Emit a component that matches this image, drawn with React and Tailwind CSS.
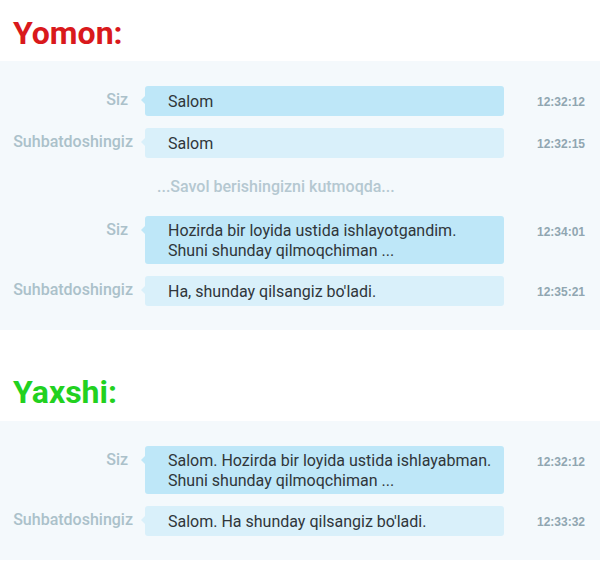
const bad = [
  { who: 'Siz', me: true, lines: ['Salom'], time: '12:32:12' },
  { who: 'Suhbatdoshingiz', lines: ['Salom'], time: '12:32:15' },
  { system: '...Savol berishingizni kutmoqda...' },
  { who: 'Siz', me: true, lines: ['Hozirda bir loyida ustida ishlayotgandim.', 'Shuni shunday qilmoqchiman ...'], time: '12:34:01' },
  { who: 'Suhbatdoshingiz', lines: ["Ha, shunday qilsangiz bo'ladi."], time: '12:35:21' },
];

const good = [
  { who: 'Siz', me: true, lines: ['Salom. Hozirda bir loyida ustida ishlayabman.', 'Shuni shunday qilmoqchiman ...'], time: '12:32:12' },
  { who: 'Suhbatdoshingiz', lines: ["Salom. Ha shunday qilsangiz bo'ladi."], time: '12:33:32' },
];

function Message({ msg }) {
  if (msg.system) {
    return (
      <div className="h-[34px] flex items-center pl-[157px] text-[16px] font-medium text-[#b5c8d1]">
        {msg.system}
      </div>
    );
  }
  const bg = msg.me ? 'bg-[#bee7f8]' : 'bg-[#d9f0fa]';
  const tail = msg.me ? 'border-r-[#bee7f8]' : 'border-r-[#d9f0fa]';
  return (
    <div className="flex items-start">
      <div className={`w-[133px] shrink-0 pt-[4px] text-right text-[16px] leading-5 font-medium text-[#abc1ca] ${msg.me ? 'pr-[5px]' : ''}`}>
        {msg.who}
      </div>
      <div className="relative ml-[12px]">
        <span className={`absolute left-[-4px] top-[10px] h-0 w-0 border-y-[4px] border-y-transparent border-r-[4px] ${tail}`} />
        <div className={`w-[359px] min-h-[30px] flex flex-col justify-center rounded-[3px] pl-[23px] pr-3 pt-[5px] pb-[3px] text-[16px] leading-5 text-[#30363a] ${bg}`}>
          {msg.lines.map((l) => (
            <div key={l}>{l}</div>
          ))}
        </div>
      </div>
      <div className="ml-[33px] pt-[8px] text-[12px] leading-4 font-bold text-[#90a6b1]" style={{ fontFamily: '"Liberation Sans", Arial, sans-serif' }}>
        {msg.time}
      </div>
    </div>
  );
}

function Panel({ messages }) {
  return (
    <div className="bg-[#f4f9fc] pt-[25px] pb-[24px] flex flex-col gap-[12px]">
      {messages.map((m, i) => (
        <Message key={i} msg={m} />
      ))}
    </div>
  );
}

export default function App() {
  return (
    <div className="w-[600px] h-[580px] bg-white overflow-hidden" style={{ fontFamily: 'Roboto, "Noto Sans", sans-serif' }}>
      <h1 className="pt-[15px] mb-[10px] pl-[13px] text-[32px] leading-9 font-bold text-[#d9191c]">Yomon:</h1>
      <Panel messages={bad} />
      <h1 className="mt-[44px] mb-[11px] pl-[13px] text-[32px] leading-9 font-bold text-[#22d11f]">Yaxshi:</h1>
      <Panel messages={good} />
    </div>
  );
}
